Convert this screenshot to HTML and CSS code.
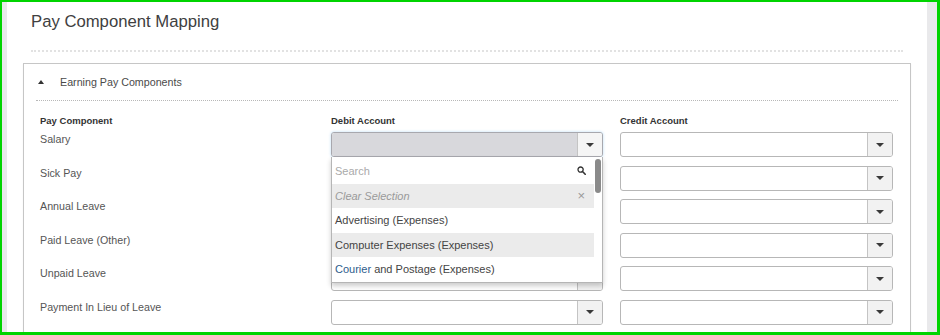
FILE: index.html
```html
<!DOCTYPE html>
<html lang="en">

<head>
    <meta charset="UTF-8">
    <title>Pay Component Mapping</title>
    <link rel="stylesheet" href="styles.css">
</head>

<body>
    <div class="frame">
        <div class="page">
            <h1 class="title">Pay Component Mapping</h1>
            <div class="rule"></div>

            <section class="panel">
                <div class="panel-head">
                    <span class="caret"></span>
                    <span>Earning Pay Components</span>
                </div>

                <div class="mapping">
                    <div class="row head">
                        <div>Pay Component</div>
                        <div>Debit Account</div>
                        <div>Credit Account</div>
                    </div>

                    <div class="row">
                        <div class="label">Salary</div>
                        <div class="cell">
                            <div class="select open">
                                <div class="select-value"></div>
                                <div class="select-arrow"><span></span></div>
                            </div>
                            <div class="dropdown">
                                <div class="search">
                                    <span>Search</span>
                                    <svg width="9" height="9" viewBox="0 0 9 9">
                                        <circle cx="3.6" cy="3.6" r="2.6" fill="none" stroke="#333" stroke-width="1.3"/>
                                        <path d="M5.5 5.5 L8.2 8.2" stroke="#333" stroke-width="1.6" stroke-linecap="round"/>
                                    </svg>
                                </div>
                                <ul class="options">
                                    <li class="clear">Clear Selection <span class="x">×</span></li>
                                    <li>Advertising (Expenses)</li>
                                    <li class="hover">Computer Expenses (Expenses)</li>
                                    <li><span class="hl">Courier</span> and Postage (Expenses)</li>
                                </ul>
                                <div class="thumb"></div>
                            </div>
                        </div>
                        <div class="cell">
                            <div class="select"><div class="select-value"></div><div class="select-arrow"><span></span></div></div>
                        </div>
                    </div>

                    <div class="row">
                        <div class="label">Sick Pay</div>
                        <div class="cell"><div class="select"><div class="select-value"></div><div class="select-arrow"><span></span></div></div></div>
                        <div class="cell"><div class="select"><div class="select-value"></div><div class="select-arrow"><span></span></div></div></div>
                    </div>

                    <div class="row">
                        <div class="label">Annual Leave</div>
                        <div class="cell"><div class="select"><div class="select-value"></div><div class="select-arrow"><span></span></div></div></div>
                        <div class="cell"><div class="select"><div class="select-value"></div><div class="select-arrow"><span></span></div></div></div>
                    </div>

                    <div class="row">
                        <div class="label">Paid Leave (Other)</div>
                        <div class="cell"><div class="select"><div class="select-value"></div><div class="select-arrow"><span></span></div></div></div>
                        <div class="cell"><div class="select"><div class="select-value"></div><div class="select-arrow"><span></span></div></div></div>
                    </div>

                    <div class="row">
                        <div class="label">Unpaid Leave</div>
                        <div class="cell"><div class="select"><div class="select-value"></div><div class="select-arrow"><span></span></div></div></div>
                        <div class="cell"><div class="select"><div class="select-value"></div><div class="select-arrow"><span></span></div></div></div>
                    </div>

                    <div class="row">
                        <div class="label">Payment In Lieu of Leave</div>
                        <div class="cell"><div class="select"><div class="select-value"></div><div class="select-arrow"><span></span></div></div></div>
                        <div class="cell"><div class="select"><div class="select-value"></div><div class="select-arrow"><span></span></div></div></div>
                    </div>
                </div>
            </section>
        </div>
    </div>
</body>

</html>
```

FILE: styles.css
```css
* {
    box-sizing: border-box;
}

body {
    margin: 0;
    padding: 0;
    font-family: "Liberation Sans", Arial, sans-serif;
    color: #555;
}

.frame {
    width: 940px;
    height: 335px;
    border: 2px solid #00d400;
    border-right-width: 3px;
    border-bottom-width: 3px;
    background: #e9e9eb;
    padding: 0 10px 0 5px;
    overflow: hidden;
}

.page {
    height: 100%;
    background: #fff;
    padding: 9px 24px 0 24px;
}

.title {
    margin: 0;
    font-size: 16.7px;
    line-height: 22px;
    font-weight: normal;
    color: #404040;
}

.rule {
    margin-top: 17px;
    border-top: 2px dotted #e2e2e2;
}

.panel {
    margin: 11px -8px 0 -8px;
    border: 1px solid #c6c6c6;
    box-shadow: 0 1px 1px rgba(0, 0, 0, 0.08);
    height: 300px;
}

.panel-head {
    margin: 0 12px 0 12px;
    height: 37px;
    padding-left: 2px;
    border-bottom: 1px dotted #b8b8b8;
    display: flex;
    align-items: center;
    font-size: 10.7px;
    color: #4a4a4a;
}

.caret {
    width: 0;
    height: 0;
    border-left: 3.5px solid transparent;
    border-right: 3.5px solid transparent;
    border-bottom: 4px solid #333;
    margin-right: 16px;
}

.mapping {
    padding: 14px 0 0 16px;
}

.row {
    display: grid;
    grid-template-columns: 274px 272px 273px;
    column-gap: 17px;
    height: 25px;
    margin-bottom: 8.6px;
}

.row.head {
    height: 12px;
    margin-bottom: 5px;
    font-size: 9.5px;
    line-height: 12px;
    font-weight: bold;
    color: #333;
}

.label {
    padding-top: 1px;
    font-size: 10.7px;
    line-height: 13px;
    color: #555;
}

.cell {
    position: relative;
}

.select {
    display: flex;
    height: 25px;
    border: 1px solid #b7b7b7;
    border-radius: 3px;
    background: #fff;
    overflow: hidden;
}

.select-value {
    flex: 1;
}

.select-arrow {
    width: 25px;
    border-left: 1px solid #c4c4c4;
    background: #f2f2f2;
    display: flex;
    justify-content: center;
    align-items: center;
}

.select-arrow span {
    width: 0;
    height: 0;
    border-left: 4px solid transparent;
    border-right: 4px solid transparent;
    border-top: 4px solid #3a3a3a;
}

.select.open {
    border-color: #a8a8ae;
    box-shadow: 0 0 3px rgba(102, 175, 233, 0.45);
}

.select.open .select-value {
    background: #d8d8dc;
}

.select.open .select-arrow {
    background: #f5f5f5;
}

.dropdown {
    position: absolute;
    top: 25px;
    left: 0;
    right: 0;
    height: 126px;
    z-index: 5;
    background: #fff;
    border: 1px solid #b5b5b5;
    border-top: none;
    box-shadow: 0 3px 5px rgba(0, 0, 0, 0.2);
    font-size: 11px;
}

.search {
    height: 27px;
    padding: 0 16px 0 3px;
    display: flex;
    justify-content: space-between;
    align-items: center;
    color: #aaa;
}

.options {
    list-style: none;
    margin: 0 8px 0 0;
    padding: 0;
}

.options li {
    height: 24.4px;
    line-height: 24.4px;
    padding-left: 3px;
    color: #444;
}

.options .clear {
    display: flex;
    justify-content: space-between;
    padding-right: 9px;
    font-style: italic;
    color: #9a9a9a;
    background: #ebebeb;
}

.options .x {
    font-style: normal;
    font-size: 13px;
    color: #999;
}

.options .hover {
    background: #ebebeb;
}

.hl {
    color: #2e5d8c;
}

.thumb {
    position: absolute;
    top: 2px;
    right: 1px;
    width: 6px;
    height: 34px;
    border-radius: 3px;
    background: #8a8a8a;
}
```
